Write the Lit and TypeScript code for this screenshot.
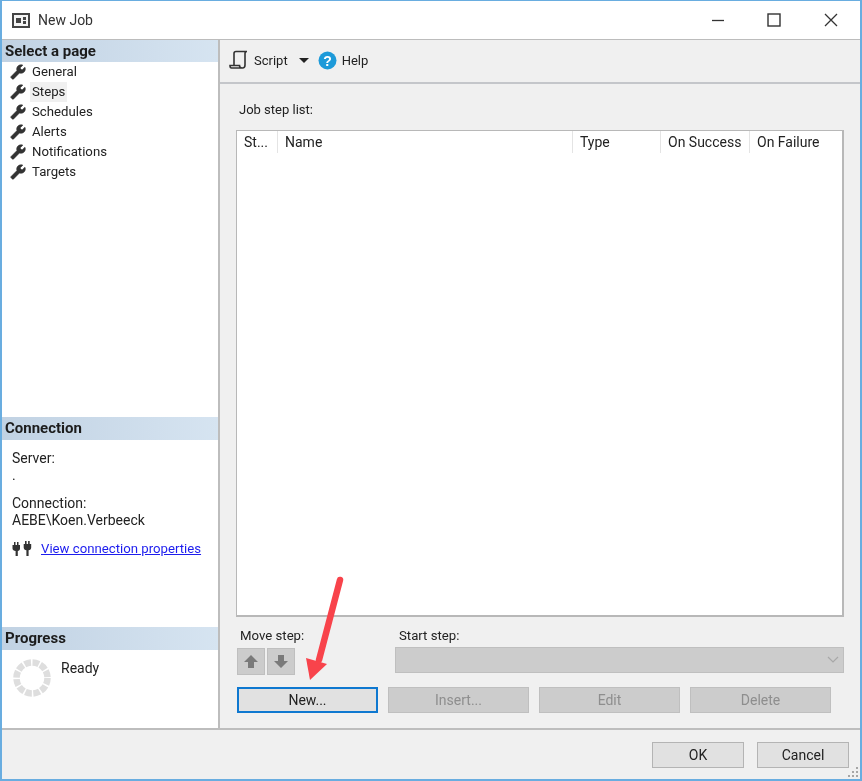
import { LitElement, html, css, svg } from 'lit';
import { customElement } from 'lit/decorators.js';

const wrench = html`<svg class="wrench" viewBox="0 0 24 24"><path transform="translate(24 0) scale(-1 1)" d="M22.7 19l-9.1-9.1c.9-2.3.4-5-1.5-6.9-2-2-5-2.4-7.4-1.3L9 6 6 9 1.6 4.7C.4 7.1.9 10.1 2.9 12.1c1.9 1.9 4.6 2.4 6.9 1.5l9.1 9.1c.4.4 1 .4 1.4 0l2.3-2.3c.5-.4.5-1.1.1-1.4z"/></svg>`;

const pages = ['General', 'Steps', 'Schedules', 'Alerts', 'Notifications', 'Targets'];

const columns = [
  { label: 'St...', width: 41 },
  { label: 'Name', width: 295 },
  { label: 'Type', width: 88 },
  { label: 'On Success', width: 89 },
  { label: 'On Failure', width: 92 },
];

@customElement('app-root')
export class AppRoot extends LitElement {
  static styles = css`
    :host {
      display: block;
      width: 862px;
      height: 781px;
      font-family: Roboto, 'Noto Sans', sans-serif;
      font-size: 14px;
      color: #222;
    }
    .window {
      box-sizing: border-box;
      width: 862px;
      height: 781px;
      display: flex;
      flex-direction: column;
      border: 2px solid #69ade0;
      border-width: 1px 2px 2px 2px;
      background: #f0f0f0;
      filter: blur(0.35px);
      position: relative;
    }
    .titlebar {
      height: 39px;
      flex: none;
      background: #fff;
      display: flex;
      align-items: center;
      padding-left: 10px;
      border-bottom: 1px solid #bcbcbc;
      box-sizing: border-box;
      font-size: 14px;
      color: #333;
    }
    .titlebar .app-icon { width: 18px; height: 15px; margin-right: 8px; }
    .winbtns { margin-left: auto; display: flex; }
    .winbtns svg { width: 14px; height: 14px; display: block; }
    .winbtns span { width: 56px; display: flex; justify-content: center; }
    .winbtns span:last-child { width: 58px; }
    .main { flex: 1; display: flex; min-height: 0; border-bottom: 2px solid #bdbdbd; }
    .side {
      width: 218px;
      flex: none;
      box-sizing: border-box;
      background: #fff;
      border-right: 2px solid #bdbdbd;
      display: flex;
      flex-direction: column;
    }
    .side h3 {
      margin: 0;
      height: 23px;
      line-height: 22px;
      padding-left: 3px;
      font-size: 15px;
      font-weight: 700;
      color: #1c1c1c;
      background: linear-gradient(90deg, #c1d2e3, #d6e4f1);
    }
    .side h3:first-child { height: 22px; }
    .pages { height: 355px; font-size: 13.2px; }
    .page { height: 20px; display: flex; align-items: center; padding-left: 8px; }
    .wrench { width: 16px; height: 16px; fill: #333; stroke: #333; stroke-width: 0.8; margin-right: 4px; flex: none; }
    .page span { padding: 0 2px; line-height: 20px; }
    .page.selected span { background: #f0f0f0; }
    .conn { height: 187px; padding: 10px 0 0 10px; box-sizing: border-box; line-height: 17px; }
    .conn p { margin: 0; }
    .conn .gap { margin-top: 11px; }
    .conn-link { display: flex; align-items: center; margin-top: 11px; white-space: nowrap; }
    .conn-link svg { width: 20px; height: 17px; margin-right: 9px; }
    .conn-link a { color: #1d1dee; text-decoration: underline; font-size: 13.2px; }
    .prog { flex: 1; display: flex; padding: 10px 0 0 11px; }
    .prog svg { width: 38px; height: 38px; margin: -1px 10px 0 0; }
    .right { flex: 1; display: flex; flex-direction: column; min-width: 0; }
    .toolbar {
      height: 44px;
      flex: none;
      box-sizing: border-box;
      border-bottom: 2px solid #c4c6ca;
      display: flex;
      align-items: center;
      padding: 0 0 2px 9px;
      font-size: 13px;
    }
    .toolbar .script { width: 20px; height: 20px; margin-right: 5px; }
    .toolbar .caret { width: 0; height: 0; border: 5px solid transparent; border-top-color: #222; border-bottom: 0; margin: 1px 9px 0 11px; }
    .toolbar .help { width: 19px; height: 19px; margin-right: 5px; }
    .content { flex: 1; padding: 17px 0 0 16px; display: flex; flex-direction: column; }
    .label { line-height: 18px; font-size: 13.2px; }
    .job-label { margin-left: 3px; height: 28px; font-size: 13px; }
    .table {
      box-sizing: border-box;
      width: 608px;
      height: 487px;
      margin-top: 1px;
      background: #fff;
      border: 2px solid #b8b8b8;
      border-width: 1px 2px 2px 1px;
    }
    .thead { display: flex; height: 22px; }
    .thead div {
      box-sizing: border-box;
      padding-left: 7px;
      line-height: 22px;
      border-right: 1px solid #e4e4e4;
      white-space: nowrap;
      overflow: hidden;
    }
    .thead div:last-child { border-right: 0; }
    .steps { display: flex; margin-top: 10px; }
    .move { width: 159px; flex: none; }
    .move .label { padding-left: 4px; height: 21px; }
    .move-btns { display: flex; gap: 2px; margin-left: 1px; }
    .move-btns div {
      width: 28px;
      height: 27px;
      box-sizing: border-box;
      background: #cccccc;
      border: 1px solid #bfbfbf;
      display: flex;
      align-items: center;
      justify-content: center;
    }
    .move-btns svg { width: 16px; height: 15px; fill: #7a7a7a; }
    .start .label { padding-left: 4px; height: 20px; }
    .combo {
      width: 449px;
      height: 26px;
      box-sizing: border-box;
      background: #cccccc;
      border: 1px solid #bfbfbf;
      display: flex;
      align-items: center;
      justify-content: flex-end;
      padding-right: 4px;
    }
    .combo svg { width: 12px; height: 8px; }
    .actions { display: flex; gap: 10px; margin: 12px 0 0 1px; }
    .btn {
      width: 141px;
      height: 26px;
      box-sizing: border-box;
      display: flex;
      align-items: center;
      justify-content: center;
      border: 1px solid #b4b4b4;
      background: #e1e1e1;
      color: #222;
    }
    .btn.primary { border: 2px solid #0e78d0; }
    .btn.off { background: #cccccc; border-color: #bfbfbf; color: #8e8e8e; }
    .footer {
      height: 49px;
      flex: none;
      display: flex;
      justify-content: flex-end;
      gap: 13px;
      padding: 12px 11px 0 0;
      box-sizing: border-box;
    }
    .footer .btn { width: 92px; }
    .grip { position: absolute; right: 1px; bottom: 1px; width: 12px; height: 12px; }
    .arrow { position: absolute; left: 298px; top: 573px; width: 52px; height: 112px; pointer-events: none; }
  `;

  render() {
    return html`
      <div class="window">
        <div class="titlebar">
          <svg class="app-icon" viewBox="0 0 18 15">
            <rect x="1" y="1" width="16" height="13" fill="#f4f4f4" stroke="#444" stroke-width="2"/>
            <rect x="4" y="5" width="5" height="5" fill="#444"/>
            <rect x="11" y="4" width="3" height="3" fill="#444"/>
            <rect x="11" y="8" width="3" height="3" fill="#444"/>
          </svg>
          New Job
          <div class="winbtns">
            <span><svg viewBox="0 0 14 14"><path d="M1 7.5h12" stroke="#333" stroke-width="1.3"/></svg></span>
            <span><svg viewBox="0 0 14 14"><rect x="1" y="1" width="12" height="12" fill="none" stroke="#333" stroke-width="1.4"/></svg></span>
            <span><svg viewBox="0 0 14 14"><path d="M1 1l12 12M13 1L1 13" stroke="#333" stroke-width="1.3"/></svg></span>
          </div>
        </div>
        <div class="main">
          <div class="side">
            <h3>Select a page</h3>
            <div class="pages">
              ${pages.map(
                (p) => html`<div class="page ${p === 'Steps' ? 'selected' : ''}">${wrench}<span>${p}</span></div>`
              )}
            </div>
            <h3>Connection</h3>
            <div class="conn">
              <p>Server:</p>
              <p>.</p>
              <p class="gap">Connection:</p>
              <p>AEBE\\Koen.Verbeeck</p>
              <div class="conn-link">
                <svg viewBox="0 0 20 17" fill="#333">
                  <path d="M2 2h1.500v3H5V2h1.500v3H8v3.500C8 10 7 11 5.800 11v5H3.600v-5C2 11 .5 10 .5 8.500V5H2z"/>
                  <path d="M13 1h1.600v3h1.500V1h1.600v3h1.500v3.500c0 1.600-1 2.700-2.600 2.700V16h-2.200v-5.800c-1.500 0-2.700-1.100-2.700-2.700V4H13z"/>
                </svg>
                <a href="#">View connection properties</a>
              </div>
            </div>
            <h3>Progress</h3>
            <div class="prog">
              <svg viewBox="0 0 38 38">
                <circle cx="19" cy="19" r="15.500" fill="none" stroke="#dedede" stroke-width="6.500" stroke-dasharray="6.600 1.520"/>
              </svg>
              <span>Ready</span>
            </div>
          </div>
          <div class="right">
            <div class="toolbar">
              <svg class="script" viewBox="0 0 20 20" fill="none" stroke="#333" stroke-width="1.600">
                <path d="M5 15V3.500C5 2 6 1.500 7 1.500h11c-1.200 0-2 .8-2 2V15c0 2-1 3-2.500 3H2.500C1.500 18 1 17 1 15.500h9.500c0 1 .5 2.500 2.500 2.500"/>
              </svg>
              Script
              <span class="caret"></span>
              <svg class="help" viewBox="0 0 19 19">
                <circle cx="9.500" cy="9.500" r="9" fill="#1d9ad9"/>
                <text x="9.500" y="14.500" text-anchor="middle" font-family="Liberation Sans, sans-serif" font-weight="700" font-size="14" fill="#fff">?</text>
              </svg>
              Help
            </div>
            <div class="content">
              <div class="label job-label">Job step list:</div>
              <div class="table">
                <div class="thead">
                  ${columns.map((c) => html`<div style="width:${c.width}px">${c.label}</div>`)}
                </div>
              </div>
              <div class="steps">
                <div class="move">
                  <div class="label">Move step:</div>
                  <div class="move-btns">
                    <div><svg viewBox="0 0 16 15"><path d="M8 1l7 7h-4v6H5V8H1z"/></svg></div>
                    <div><svg viewBox="0 0 16 15"><path d="M8 14l7-7h-4V1H5v6H1z"/></svg></div>
                  </div>
                </div>
                <div class="start">
                  <div class="label">Start step:</div>
                  <div class="combo">
                    <svg viewBox="0 0 12 8"><path d="M1 1l5 5 5-5" fill="none" stroke="#a8a8a8" stroke-width="1.200"/></svg>
                  </div>
                </div>
              </div>
              <div class="actions">
                <div class="btn primary">New...</div>
                <div class="btn off">Insert...</div>
                <div class="btn off">Edit</div>
                <div class="btn off">Delete</div>
              </div>
            </div>
          </div>
        </div>
        <div class="footer">
          <div class="btn">OK</div>
          <div class="btn">Cancel</div>
        </div>
        <svg class="grip" viewBox="0 0 12 12" fill="#a6a6a6">
          ${[[9, 1], [5, 5], [9, 5], [1, 9], [5, 9], [9, 9]].map(
            ([x, y]) => svg`<rect x="${x}" y="${y}" width="2" height="2"/>`
          )}
        </svg>
        <svg class="arrow" viewBox="0 0 52 112">
          <path d="M40 6L19 86" stroke="#f8434b" stroke-width="6.500" stroke-linecap="round" fill="none"/>
          <path d="M6 84L27 90 10 106z" fill="#f8434b"/>
        </svg>
      </div>
    `;
  }
}
